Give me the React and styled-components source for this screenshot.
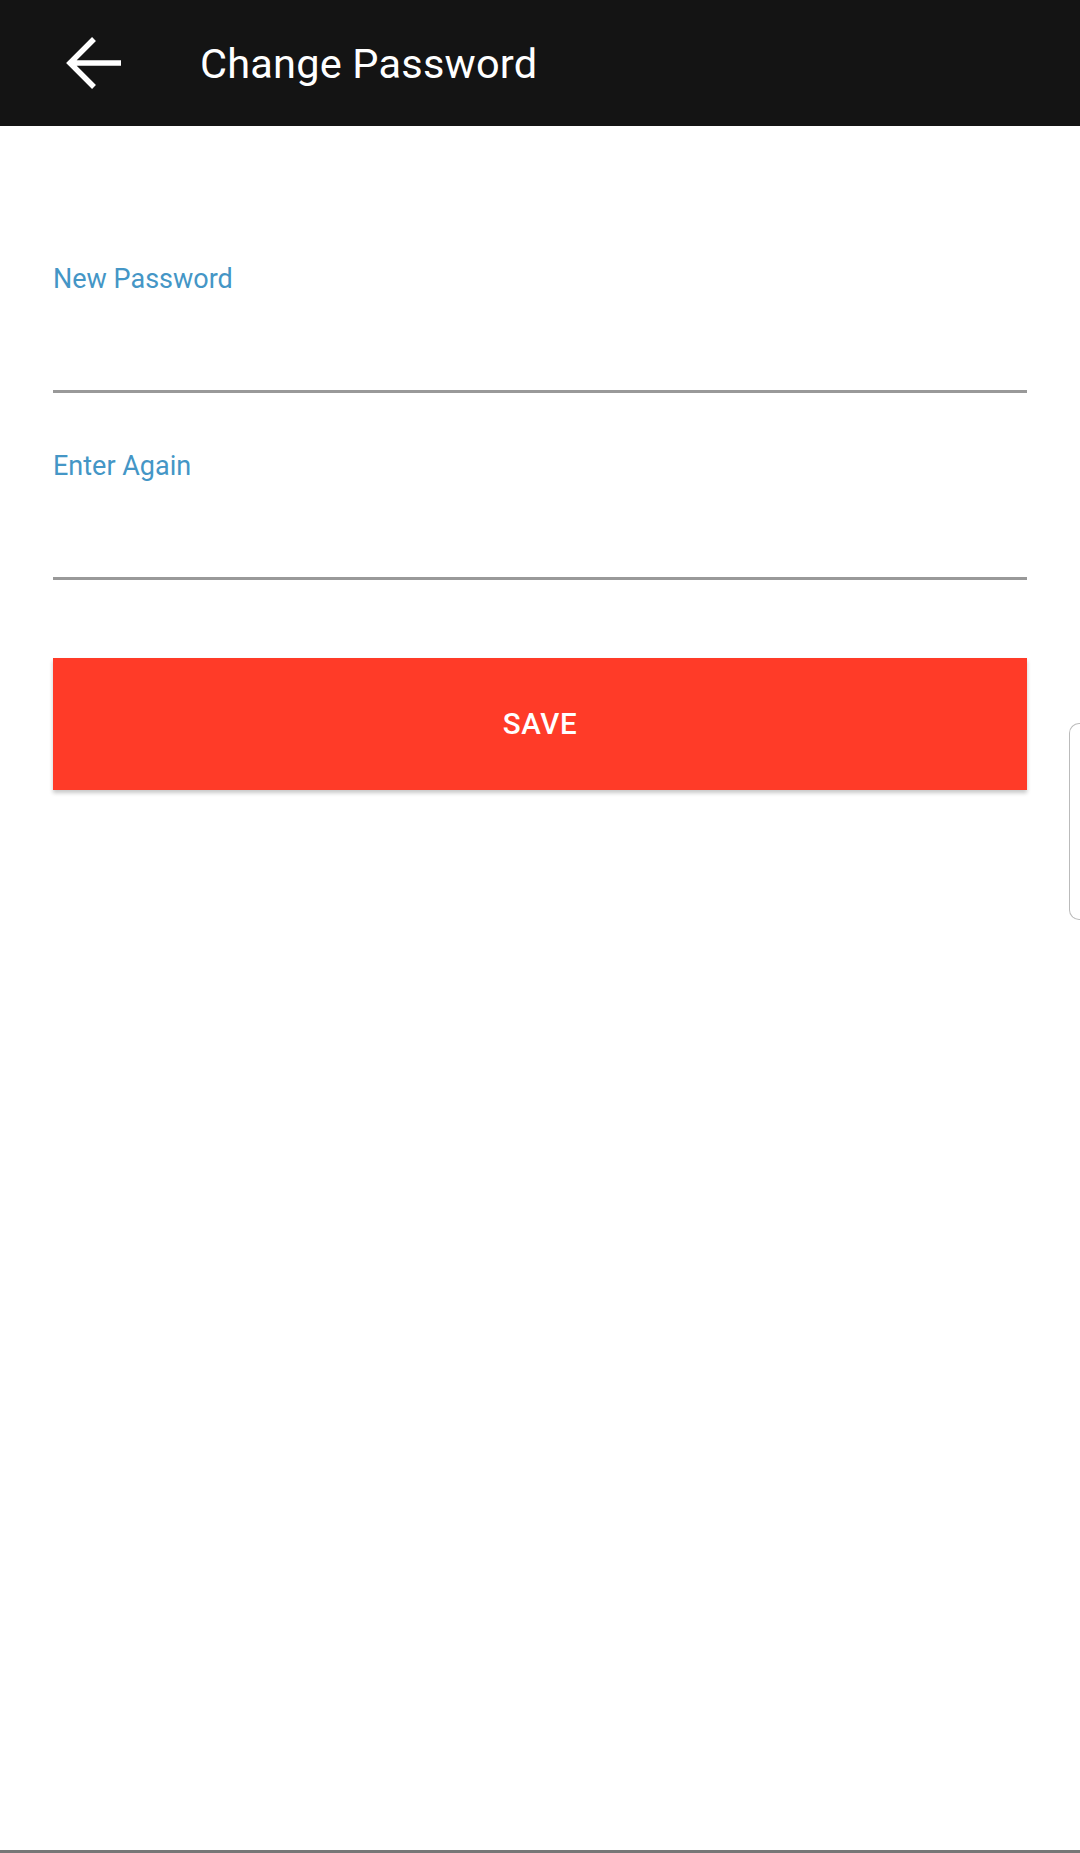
import { createGlobalStyle, styled } from "styled-components";

const GlobalStyle = createGlobalStyle`
  html, body {
    margin: 0;
    padding: 0;
    background: #fff;
  }
  body {
    font-family: Roboto, "Noto Sans", "Liberation Sans", sans-serif;
  }
  * {
    box-sizing: border-box;
  }
`;

const Screen = styled.div`
  position: relative;
  width: 1080px;
  height: 1853px;
  display: flex;
  flex-direction: column;
  background: #fff;
  border-bottom: 3px solid #777;
  overflow: hidden;
`;

const Toolbar = styled.header`
  height: 126px;
  flex-shrink: 0;
  display: flex;
  align-items: center;
  padding-left: 66px;
  background: #141414;
  color: #fff;
`;

const BackButton = styled.button`
  width: 56px;
  height: 56px;
  padding: 0;
  border: none;
  background: transparent;
  display: flex;
  cursor: pointer;
`;

const Title = styled.h1`
  margin: 0 0 0 78px;
  font-size: 41.5px;
  font-weight: 400;
  line-height: normal;
  letter-spacing: 0.2px;
`;

const Form = styled.form`
  display: flex;
  flex-direction: column;
  padding: 137px 53px 0;
`;

const Field = styled.label`
  display: flex;
  flex-direction: column;
  margin-bottom: ${(p) => p.$gap}px;
`;

const Label = styled.span`
  font-size: 27px;
  line-height: 32px;
  color: #4496c6;
`;

const Input = styled.input`
  height: 98px;
  border: none;
  border-bottom: 3px solid #999;
  background: transparent;
  outline: none;
  padding: 0;
  font-size: 36px;
  font-family: inherit;
`;

const SaveButton = styled.button`
  height: 132px;
  border: none;
  background: #ff3b28;
  color: #fff;
  font-family: inherit;
  font-size: 29.5px;
  font-weight: 500;
  letter-spacing: 0.6px;
  box-shadow: 0 3px 4px rgba(0, 0, 0, 0.22);
  cursor: pointer;
`;

const EdgeHandle = styled.div`
  position: absolute;
  top: 723px;
  right: 0;
  width: 11px;
  height: 197px;
  border: 1.5px solid #bbb;
  border-right: none;
  border-radius: 10px 0 0 10px;
  background: #fff;
`;

function BackArrow() {
  return (
    <svg width="56" height="56" viewBox="0 0 56 56" fill="none">
      <path
        d="M55 28H6M28 4L4 28l24 24"
        stroke="#fff"
        strokeWidth="5.5"
        strokeLinejoin="miter"
      />
    </svg>
  );
}

export default function App() {
  return (
    <>
      <GlobalStyle />
      <Screen>
        <Toolbar>
          <BackButton aria-label="Back">
            <BackArrow />
          </BackButton>
          <Title>Change Password</Title>
        </Toolbar>
        <Form onSubmit={(e) => e.preventDefault()}>
          <Field $gap={57}>
            <Label>New Password</Label>
            <Input type="password" />
          </Field>
          <Field $gap={78}>
            <Label>Enter Again</Label>
            <Input type="password" />
          </Field>
          <SaveButton type="submit">SAVE</SaveButton>
        </Form>
        <EdgeHandle />
      </Screen>
    </>
  );
}
